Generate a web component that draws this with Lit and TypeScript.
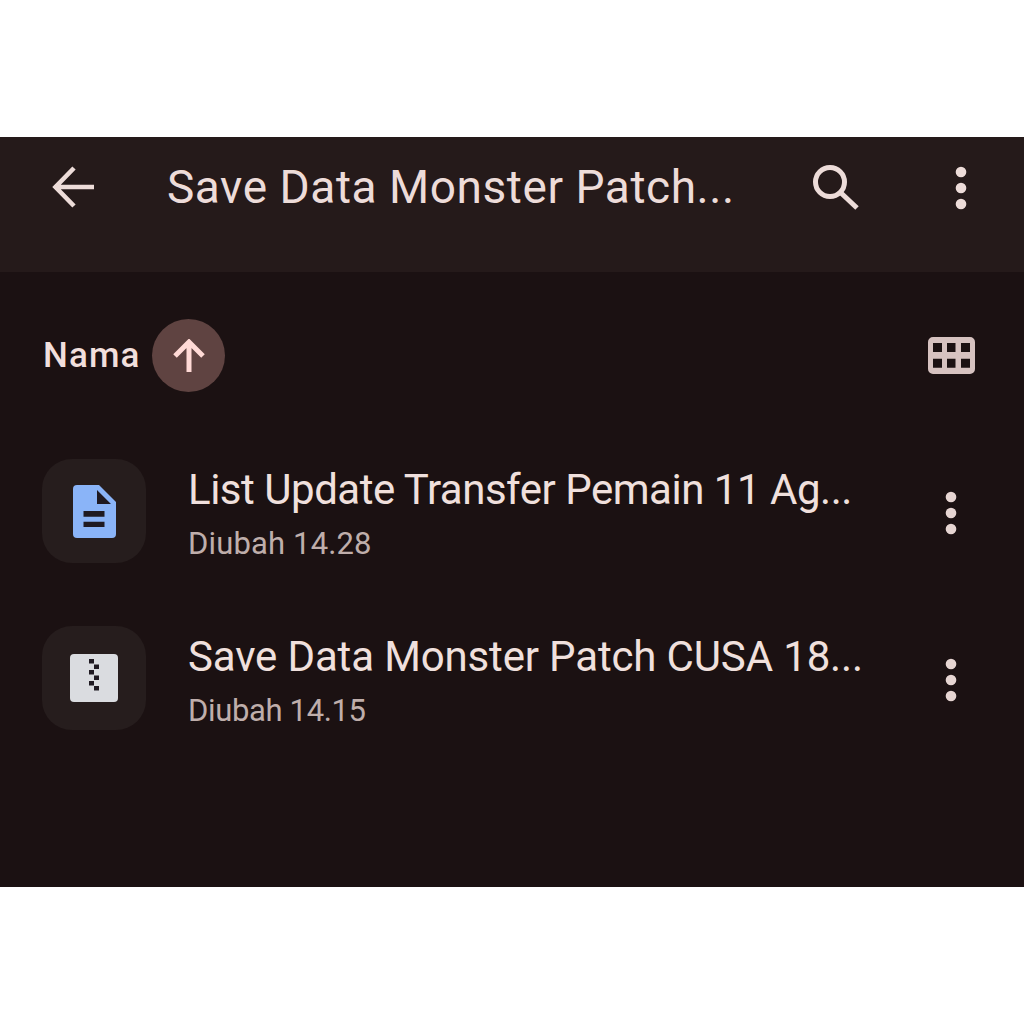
import { LitElement, html, css } from "lit";
import { customElement } from "lit/decorators.js";

const dots = (cls: string) => html`<svg class=${cls} viewBox="0 0 16 48" aria-hidden="true">
  <circle cx="8" cy="8" r="5.3" /><circle cx="8" cy="24" r="5.3" /><circle cx="8" cy="40" r="5.3" />
</svg>`;

const FILES = [
  { name: "List Update Transfer Pemain 11 Ag...", meta: "Diubah 14.28", kind: "doc", nameSpacing: -0.48, metaSpacing: 0.15 },
  { name: "Save Data Monster Patch CUSA 18...", meta: "Diubah 14.15", kind: "zip", nameSpacing: -0.15, metaSpacing: -0.35 },
];

@customElement("app-root")
export class AppRoot extends LitElement {
  static styles = css`
    :host {
      display: block;
      width: 1024px;
      height: 1024px;
      background: #fff;
      font-family: Roboto, "Noto Sans", sans-serif;
      overflow: hidden;
    }
    .screen {
      margin-top: 137px;
      height: 750px;
      background: #1b1112;
      display: flex;
      flex-direction: column;
    }
    .bar {
      height: 135px;
      background: #251a1a;
      display: flex;
      align-items: flex-start;
      box-sizing: border-box;
      padding: 25px 0 0 52px;
      color: #eddcd9;
    }
    .back { width: 43px; height: 50px; flex: none; }
    .title {
      margin-left: 72px;
      width: 600px;
      font-size: 46px;
      line-height: 50px;
      white-space: nowrap;
      flex: none;
      letter-spacing: 0.56px;
    }
    .search { width: 48px; height: 50px; margin-left: 45px; flex: none; }
    .more-top { width: 16px; height: 48px; margin-left: 93px; margin-top: 2px; fill: #eddcd9; flex: none; }
    .sort {
      display: flex;
      align-items: center;
      padding: 47px 49px 0 43px;
      color: #f1dfdc;
    }
    .sort-label { font-size: 35px; font-weight: 500; letter-spacing: 1.1px; line-height: 73px; }
    .badge {
      width: 73px;
      height: 73px;
      border-radius: 50%;
      background: #5f4341;
      display: flex;
      align-items: center;
      justify-content: center;
      margin-left: 12px;
    }
    .badge svg { width: 32px; height: 33px; }
    .grid { margin-left: auto; width: 47px; height: 37px; }
    .list { display: flex; flex-direction: column; gap: 63px; padding: 67px 65px 0 42px; }
    .row { display: flex; align-items: center; height: 104px; }
    .tile {
      width: 104px;
      height: 104px;
      border-radius: 30px;
      background: #261d1d;
      display: flex;
      align-items: center;
      justify-content: center;
      flex: none;
    }
    .text { margin-left: 42px; flex: 1; min-width: 0; padding-top: 5px; }
    .name {
      font-size: 42px;
      line-height: 50px;
      color: #f0e0dd;
      white-space: nowrap;
    }
    .meta {
      font-size: 31px;
      line-height: 38px;
      margin-top: 10px;
      color: #bfaeab;
    }
    .more { width: 16px; height: 48px; fill: #e6d5d2; flex: none; margin-top: 3px; }
    .doc { width: 43px; height: 53px; }
    .zip { width: 48px; height: 48px; }
  `;

  private icon(kind: string) {
    if (kind === "doc") {
      return html`<svg class="doc" viewBox="0 0 43 53" aria-hidden="true">
        <path fill="#8ab4f8" d="M4 0h22l17 17v32a4 4 0 0 1-4 4H4a4 4 0 0 1-4-4V4a4 4 0 0 1 4-4Z" />
        <path fill="#1f1a22" d="M24 5v14h14ZM10.5 26h21v5.7h-21ZM10.5 36.700h21v5.300h-21Z" />
      </svg>`;
    }
    return html`<svg class="zip" viewBox="0 0 48 48" aria-hidden="true">
      <rect width="48" height="48" rx="4" fill="#dadce0" />
      <path fill="#1f1a22" d="M19 5h5v4.500h-5ZM24 10.500h5v4.500h-5ZM19 16h5v4.500h-5ZM24 21.500h5v4.500h-5ZM19 27h5v4.500h-5ZM24 32h5v4.500h-5Z" />
    </svg>`;
  }

  render() {
    return html`<div class="screen">
      <div class="bar">
        <svg class="back" viewBox="0 0 43 50" fill="none" stroke="#eddcd9" stroke-width="4.600" aria-hidden="true">
          <path d="M42 25H4M22 6 3.500 25 22 44" />
        </svg>
        <div class="title">Save Data Monster Patch...</div>
        <svg class="search" viewBox="0 0 48 50" fill="none" stroke="#eddcd9" stroke-width="5" aria-hidden="true">
          <circle cx="18" cy="20" r="14.500" />
          <path d="M28.500 30.500 45 46" />
        </svg>
        ${dots("more-top")}
      </div>
      <div class="sort">
        <span class="sort-label">Nama</span>
        <span class="badge">
          <svg viewBox="0 0 32 33" fill="none" stroke="#ffdad6" stroke-width="5" aria-hidden="true">
            <path d="M16 33V3M2 17 16 3 30 17" />
          </svg>
        </span>
        <svg class="grid" viewBox="0 0 47 37" aria-hidden="true">
          <path fill="#d6c2c0" fill-rule="evenodd" d="M5 0h37a5 5 0 0 1 5 5v27a5 5 0 0 1-5 5H5a5 5 0 0 1-5-5V5a5 5 0 0 1 5-5ZM5 6v9h9V6Zm14 0v9h8.500V6Zm14 0v9h9V6ZM5 21.700v9h9v-9Zm14 0v9h8.500v-9Zm14 0v9h9v-9Z" />
        </svg>
      </div>
      <div class="list">
        ${FILES.map(
          (f) => html`<div class="row">
            <div class="tile">${this.icon(f.kind)}</div>
            <div class="text">
              <div class="name" style="letter-spacing:${f.nameSpacing}px">${f.name}</div>
              <div class="meta" style="letter-spacing:${f.metaSpacing}px">${f.meta}</div>
            </div>
            ${dots("more")}
          </div>`
        )}
      </div>
    </div>`;
  }
}
